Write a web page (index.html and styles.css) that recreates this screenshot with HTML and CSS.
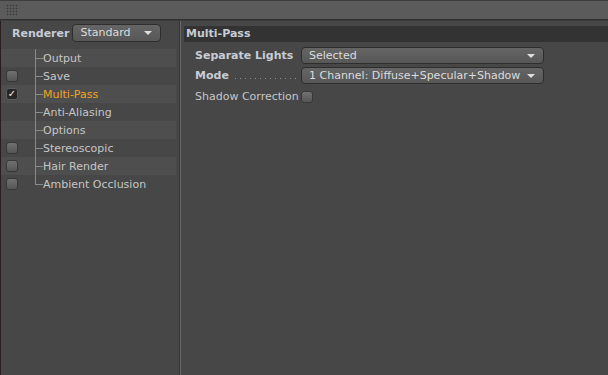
FILE: index.html
```html
<!DOCTYPE html>
<html lang="en">
<head>
    <meta charset="UTF-8">
    <title>Render Settings</title>
    <link rel="stylesheet" href="styles.css">
</head>
<body>
    <div class="titlebar"><span class="grip"></span></div>
    <div class="main">
        <aside class="sidebar">
            <div class="renderer">
                <span class="renderer-label">Renderer</span>
                <div class="select small">Standard<span class="arrow"></span></div>
            </div>
            <ul class="tree">
                <li class="row"><span class="slot"></span><span class="branch"></span>Output</li>
                <li class="row"><span class="slot"><span class="check"></span></span><span class="branch"></span>Save</li>
                <li class="row active"><span class="slot"><span class="check on">&#10003;</span></span><span class="branch"></span>Multi-Pass</li>
                <li class="row"><span class="slot"></span><span class="branch"></span>Anti-Aliasing</li>
                <li class="row"><span class="slot"></span><span class="branch"></span>Options</li>
                <li class="row"><span class="slot"><span class="check"></span></span><span class="branch"></span>Stereoscopic</li>
                <li class="row"><span class="slot"><span class="check"></span></span><span class="branch"></span>Hair Render</li>
                <li class="row last"><span class="slot"><span class="check"></span></span><span class="branch"></span>Ambient Occlusion</li>
            </ul>
        </aside>
        <section class="panel">
            <h2 class="panel-title">Multi-Pass</h2>
            <div class="form">
                <div class="field">
                    <label class="field-label bold">Separate Lights</label>
                    <div class="select wide">Selected<span class="arrow"></span></div>
                </div>
                <div class="field">
                    <label class="field-label bold">Mode <span class="leader"></span></label>
                    <div class="select wide">1 Channel: Diffuse+Specular+Shadow<span class="arrow"></span></div>
                </div>
                <div class="field plain">
                    <label class="field-label">Shadow Correction</label>
                    <span class="check"></span>
                </div>
            </div>
        </section>
    </div>
</body>
</html>
```

FILE: styles.css
```css
body {
    margin: 0;
    width: 608px;
    height: 375px;
    overflow: hidden;
    background-color: #474747;
    color: #c6c6c6;
    font-family: "DejaVu Sans", Verdana, sans-serif;
    font-size: 11px;
}
.titlebar {
    height: 18px;
    background-color: #5b5b5b;
    border-top: 1px solid #3e3e3e;
    border-bottom: 1px solid #2f2f2f;
    box-shadow: 0 1px 0 #3c3c3c;
    display: flex;
    align-items: center;
    padding-left: 6px;
}
.grip {
    width: 12px;
    height: 12px;
    background-image: radial-gradient(circle, #3a3a3a 0.7px, transparent 1.1px);
    background-size: 3px 3px;
}
.main {
    display: flex;
    height: 355px;
    margin-top: 1px;
}
.sidebar {
    width: 178px;
    border-left: 1px solid #2a1d1d;
    border-right: 1px solid #343434;
}
.renderer {
    display: flex;
    align-items: center;
    height: 18px;
    margin-top: 3px;
    padding-left: 11px;
    gap: 3px;
}
.renderer-label {
    font-weight: bold;
    color: #c8ccd4;
}
.select {
    position: relative;
    box-sizing: border-box;
    height: 17px;
    line-height: 15px;
    padding-left: 7px;
    border: 1px solid #2e2e2e;
    border-radius: 4px;
    background: linear-gradient(#656565, #575757);
    color: #dcdcdc;
    white-space: nowrap;
}
.select.small {
    width: 89px;
    height: 18px;
    line-height: 16px;
}
.select.wide {
    width: 243px;
}
.arrow {
    position: absolute;
    right: 8px;
    top: 6px;
    border-left: 4px solid transparent;
    border-right: 4px solid transparent;
    border-top: 4px solid #dedede;
}
.tree {
    list-style: none;
    margin: 7px 0 0;
    padding: 0;
}
.row {
    display: flex;
    align-items: center;
    height: 18px;
    width: 175px;
    color: #c6c6c6;
}
.row:nth-child(odd) {
    background-color: #4e4e4e;
}
.row.active {
    color: #f2a51e;
}
.slot {
    width: 12px;
    height: 12px;
    margin-left: 5px;
    margin-right: 17px;
}
.check {
    display: block;
    box-sizing: border-box;
    width: 12px;
    height: 12px;
    border: 1px solid #383838;
    border-radius: 3px;
    background: linear-gradient(#717171, #565656);
}
.check.on {
    background: #262626;
    border-color: #5c5c5c;
    color: #f0f0f0;
    font-size: 10px;
    line-height: 10px;
    text-align: center;
    overflow: hidden;
}
.branch {
    width: 8px;
    height: 18px;
    background:
        linear-gradient(#8a8a8a, #8a8a8a) 0 0 / 1px 100% no-repeat,
        linear-gradient(#8a8a8a, #8a8a8a) 0 50% / 100% 1px no-repeat;
}
.row.last .branch {
    background:
        linear-gradient(#8a8a8a, #8a8a8a) 0 0 / 1px 10px no-repeat,
        linear-gradient(#8a8a8a, #8a8a8a) 0 9px / 100% 1px no-repeat;
}
.panel {
    flex: 1;
    border-left: 1px solid #686868;
    padding-top: 5px;
}
.panel-title {
    margin: 0 0 0 3px;
    height: 16px;
    line-height: 16px;
    padding-left: 2px;
    background-color: #333333;
    font-size: 11px;
    font-weight: bold;
    color: #c8ccd4;
}
.form {
    padding: 5px 0 0 14px;
    display: flex;
    flex-direction: column;
    gap: 3px;
}
.field {
    display: flex;
    align-items: center;
    height: 17px;
}
.field.plain {
    height: 17px;
    margin-top: 1px;
}
.field-label {
    display: flex;
    align-items: baseline;
    width: 106px;
    color: #c6c6c6;
}
.field.plain .field-label {
    width: auto;
    margin-right: 2px;
}
.field-label.bold {
    font-weight: bold;
    color: #c8ccd4;
}
.leader {
    flex: 1;
    height: 1px;
    margin: 0 4px 0 6px;
    background: linear-gradient(to right, #8c8c8c 1px, transparent 1px) 0 0 / 5px 1px repeat-x;
}
```
